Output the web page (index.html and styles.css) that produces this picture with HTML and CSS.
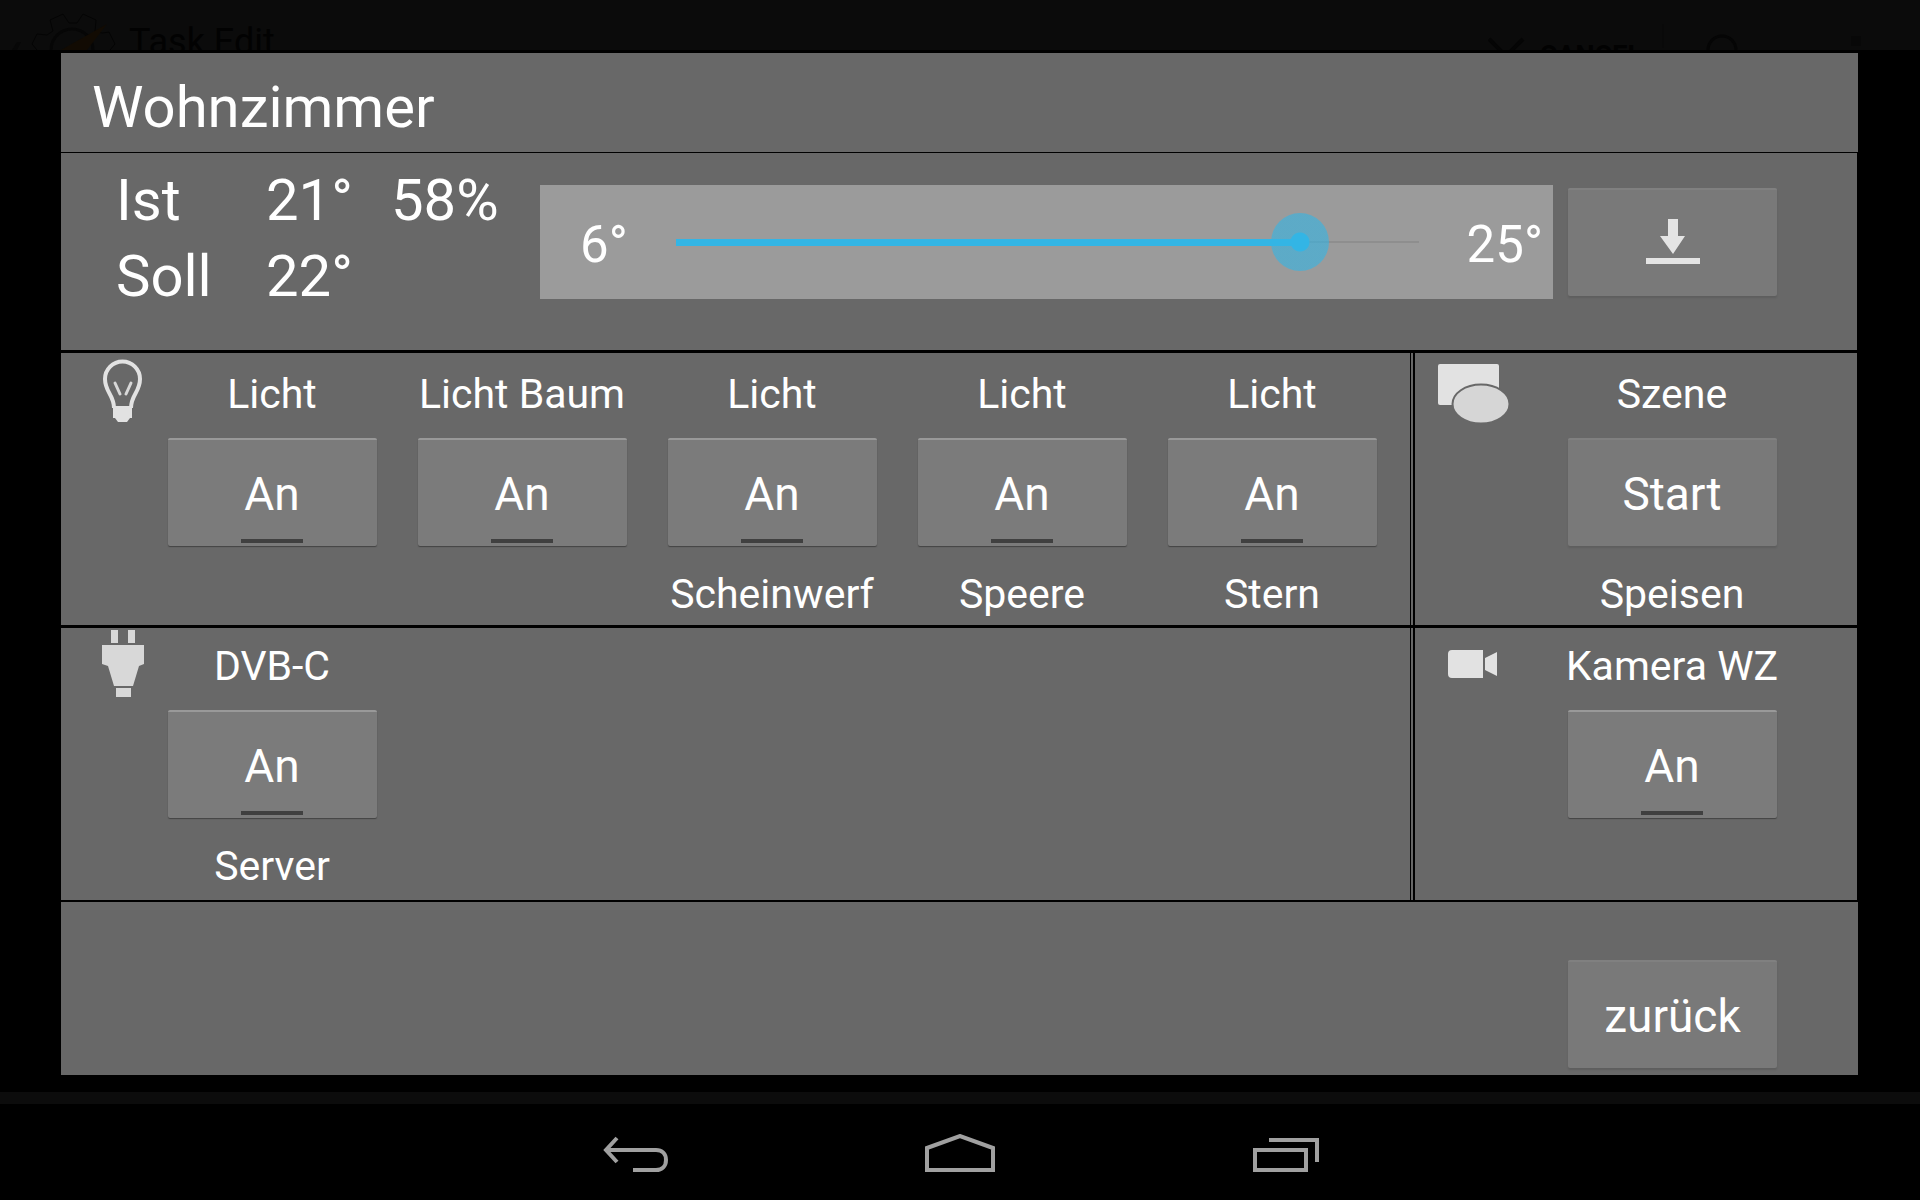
FILE: index.html
```html
<!DOCTYPE html>
<html lang="de">
<head>
    <meta charset="UTF-8">
    <meta name="viewport" content="width=device-width, initial-scale=1.0">
    <title>Wohnzimmer</title>
    <link rel="stylesheet" href="styles.css">
</head>
<body>
    <!-- Dimmed app bar behind the dialog -->
    <header class="app-bar">
        <svg class="app-logo" viewBox="0 0 129 50">
            <path d="M17 42h4l-4 8h-5z" fill="#070707"/>
            <path d="M37 50l-5-6 5-10 10 1 6-4-3-11 13-6 6 9h8l6-9 13 6-1 12 8 1 6-1 6 12-5 6" fill="none" stroke="#040404"/>
            <path d="M51 50a21 21 0 0 1 42 0" fill="none" stroke="#060606" stroke-width="3"/>
            <path d="M107 24L61 50h26z" fill="#120b03"/>
        </svg>
        <span class="app-title">Task Edit</span>
        <svg class="cancel-icon" viewBox="0 0 52 50">
            <path d="M1 39l34 34M35 39L1 73" stroke="#050505" stroke-width="4"/>
        </svg>
        <span class="app-cancel">CANCEL</span>
        <svg class="app-tools" viewBox="0 0 278 50">
            <path d="M21 24v24" stroke="#090909"/>
            <circle cx="80" cy="50" r="14" fill="none" stroke="#050505" stroke-width="3"/>
            <path d="M209 36h10v10h-10z" fill="#080808"/>
        </svg>
    </header>

    <main class="scene">
        <h1 class="scene-title">Wohnzimmer</h1>

        <section class="climate">
            <div class="climate-main">
                <dl class="readings">
                    <dt>Ist</dt>
                    <dd>21°</dd>
                    <dd>58%</dd>
                    <dt>Soll</dt>
                    <dd>22°</dd>
                </dl>
                <div class="slider">
                    <label class="slider-min" for="temperature">6°</label>
                    <input type="range" id="temperature" class="slider-input" min="6" max="25" step="0.5" value="22.5">
                    <span class="slider-max">25°</span>
                </div>
            </div>
            <button type="button" class="button" aria-label="Speichern">
                <svg class="download-icon" viewBox="0 0 54 46">
                    <path d="M22 0h10v17h7L27 35 14 17h8zM0 39h54v6H0z" fill="#e4e4e4"/>
                </svg>
            </button>
        </section>

        <section class="row">
            <div class="group">
                <svg class="icon" viewBox="0 0 48 72">
                    <path d="M15 55c0-13-9-16-9-29a17.500 17.500 0 0 1 35 0c0 13-9 16-9 29" fill="none" stroke="#e2e2e2" stroke-width="4"/>
                    <path d="M16 30l5 11M32 30l-5 11" fill="none" stroke="#d8d8d8" stroke-width="3" stroke-linecap="round"/>
                    <path d="M14 53h19v12h-2l-3 4h-9l-3-4h-2z" fill="#e2e2e2"/>
                </svg>
                <div class="device">
                    <span class="device-name">Licht</span>
                    <button type="button" class="button toggle">An</button>
                </div>
                <div class="device">
                    <span class="device-name">Licht Baum</span>
                    <button type="button" class="button toggle">An</button>
                </div>
                <div class="device">
                    <span class="device-name">Licht</span>
                    <button type="button" class="button toggle">An</button>
                    <span class="device-name">Scheinwerf</span>
                </div>
                <div class="device">
                    <span class="device-name">Licht</span>
                    <button type="button" class="button toggle">An</button>
                    <span class="device-name">Speere</span>
                </div>
                <div class="device">
                    <span class="device-name">Licht</span>
                    <button type="button" class="button toggle">An</button>
                    <span class="device-name">Stern</span>
                </div>
            </div>
            <div class="group side">
                <svg class="icon" viewBox="0 0 72 72">
                    <rect x="0" y="11" width="61" height="41" rx="2" fill="#e2e2e2"/>
                    <ellipse cx="43" cy="51" rx="28.500" ry="19.500" fill="#d6d6d6" stroke="#686868" stroke-width="2"/>
                </svg>
                <div class="device">
                    <span class="device-name">Szene</span>
                    <button type="button" class="button">Start</button>
                    <span class="device-name">Speisen</span>
                </div>
            </div>
        </section>

        <section class="row">
            <div class="group">
                <svg class="icon" viewBox="0 0 48 72">
                    <path d="M12 2h7v13h-7zM29 2h7v13h-7zM3 17h42v19l-5 2-6 20H15L9 38l-6-2zM17 60h15v9H17z" fill="#d8d8d8"/>
                </svg>
                <div class="device">
                    <span class="device-name">DVB-C</span>
                    <button type="button" class="button toggle">An</button>
                    <span class="device-name">Server</span>
                </div>
            </div>
            <div class="group side">
                <svg class="icon" viewBox="0 0 72 72">
                    <path d="M14 22h31v28H14q-4 0-4-4V26q0-4 4-4zM47 30l12-6v24l-12-6z" fill="#e2e2e2"/>
                </svg>
                <div class="device">
                    <span class="device-name">Kamera WZ</span>
                    <button type="button" class="button toggle">An</button>
                </div>
            </div>
        </section>

        <footer class="actions">
            <button type="button" class="button">zurück</button>
        </footer>
    </main>

    <nav class="system-bar">
        <button type="button" class="nav-button" aria-label="Zurück">
            <svg viewBox="0 0 76 40" fill="none" stroke="#a0a0a0" stroke-width="4">
                <path d="M17 4L6 16l11 12M6 16h50c6 0 10 4 10 10s-4 10-10 10H33"/>
            </svg>
        </button>
        <button type="button" class="nav-button" aria-label="Startseite">
            <svg viewBox="0 0 76 40" fill="none" stroke="#a0a0a0" stroke-width="4">
                <path d="M5 14L38 2l33 12v22H5z"/>
            </svg>
        </button>
        <button type="button" class="nav-button" aria-label="Letzte Apps">
            <svg viewBox="0 0 76 40" fill="none" stroke="#a0a0a0" stroke-width="4">
                <path d="M11 16h51v20H11zM25 6h48v22"/>
            </svg>
        </button>
    </nav>
</body>
</html>
```

FILE: styles.css
```css
* {
    margin: 0;
    padding: 0;
    box-sizing: border-box;
}

body {
    font-family: Roboto, 'Noto Sans', sans-serif;
    background: #000;
    color: #fff;
    min-height: 100vh;
    display: flex;
    flex-direction: column;
}

.app-bar {
    display: flex;
    height: 50px;
    margin-bottom: 3px;
    background: #0b0b0b;
    color: #020202;
    overflow: hidden;
}

.app-logo {
    width: 129px;
    height: 50px;
}

.app-title {
    font-size: 36px;
    line-height: 84px;
}

.cancel-icon {
    width: 52px;
    height: 50px;
    margin-left: auto;
}

.app-cancel {
    font-size: 27px;
    font-weight: 700;
    line-height: 113px;
}

.app-tools {
    width: 278px;
    height: 50px;
}

.scene {
    flex: 1;
    display: flex;
    flex-direction: column;
    margin: 0 62px 17px 61px;
    background: #686868;
}

.scene-title {
    height: 100px;
    padding-left: 31px;
    border-bottom: 1px solid #000;
    font-size: 58px;
    font-weight: 400;
    line-height: 108px;
}

.climate {
    display: flex;
    height: 200px;
    border-right: 1px solid #000;
    border-bottom: 3px solid #000;
    padding: 32px 80px 0 55px;
    gap: 15px;
}

.climate-main {
    flex: 1;
    display: flex;
}

.readings {
    display: grid;
    grid-template-columns: 150px 125px 149px;
    grid-auto-rows: 76px;
    margin-top: -23px;
    font-size: 58px;
    line-height: 76px;
}

.slider {
    flex: 1;
    display: flex;
    align-items: center;
    height: 114px;
    padding: 0 10px 0 40px;
    background: #9b9b9b;
    font-size: 51px;
}

.slider-min,
.slider-max {
    padding-top: 4px;
}

.slider-min {
    width: 96px;
}

.slider-max {
    width: 88px;
    text-align: right;
}

.slider-input {
    flex: 1;
    min-width: 0;
    height: 58px;
    margin-right: 36px;
    appearance: none;
    background:
        linear-gradient(#33b5e5, #33b5e5) left center / 84% 7px no-repeat,
        linear-gradient(#8e8e8e, #8e8e8e) center / 100% 2px no-repeat;
}

.slider-input::-webkit-slider-thumb {
    appearance: none;
    width: 58px;
    height: 58px;
    border-radius: 50%;
    background: radial-gradient(circle, #33b5e5 9px, rgba(51, 181, 229, 0.6) 10px);
}

.button {
    position: relative;
    display: flex;
    flex: none;
    align-items: center;
    justify-content: center;
    width: 209px;
    height: 108px;
    padding-top: 2px;
    border: none;
    border-top: 2px solid #808080;
    border-radius: 2px;
    background: #797979;
    box-shadow: 0 2px 2px rgba(0, 0, 0, 0.1);
    color: #fff;
    font-family: inherit;
    font-size: 46px;
}

.toggle {
    border-top-color: #999;
    background: #7b7b7b;
    box-shadow: 0 1px 1px #444;
}

/* State bar at the lower edge of a toggle */
.toggle::after {
    content: '';
    position: absolute;
    left: 50%;
    bottom: 3px;
    width: 62px;
    height: 4px;
    margin-left: -31px;
    background: #404040;
}

.climate .button {
    margin-top: 3px;
    padding: 0 0 2px;
}

.download-icon {
    width: 54px;
    height: 46px;
}

.row {
    display: flex;
    height: 275px;
    border-right: 1px solid #000;
    border-bottom: 3px solid #000;
}

.row + .row {
    height: 274px;
    border-bottom-width: 2px;
}

.group {
    flex: 1;
    display: flex;
    padding-left: 38px;
    border-right: 1px solid #000;
}

.side {
    flex: none;
    margin-left: 2px;
    padding: 0 60px 0 23px;
    border-left: 2px solid #000;
    border-right: none;
}

.icon {
    flex: none;
    width: 48px;
    height: 72px;
}

.side .icon {
    width: 72px;
    margin-right: 37px;
}

.device {
    display: flex;
    flex-direction: column;
    align-items: center;
    width: 250px;
}

.device-name {
    flex: none;
    height: 85px;
    font-size: 41px;
    line-height: 82px;
}

.row + .row .device-name {
    height: 82px;
    line-height: 76px;
}

.device .button + .device-name,
.row + .row .button + .device-name {
    height: 78px;
    line-height: 96px;
}

.actions {
    flex: 1;
    display: flex;
    justify-content: flex-end;
    align-items: flex-end;
    padding: 0 81px 7px 0;
}

.system-bar {
    display: flex;
    justify-content: center;
    gap: 246px;
    height: 108px;
    padding-top: 30px;
    border-top: 12px solid #0c0c0c;
}

.nav-button {
    width: 76px;
    height: 40px;
    border: none;
    background: none;
}
```
